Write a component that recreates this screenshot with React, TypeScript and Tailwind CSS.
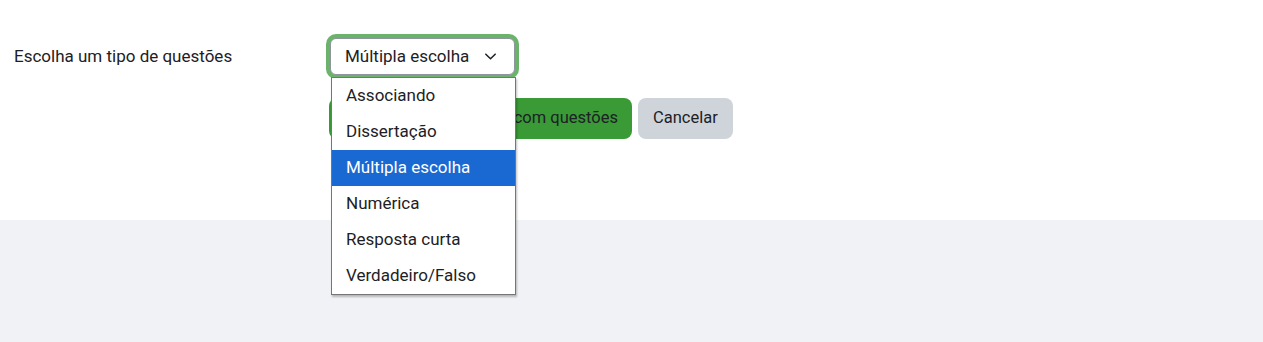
const options = [
  "Associando",
  "Dissertação",
  "Múltipla escolha",
  "Numérica",
  "Resposta curta",
  "Verdadeiro/Falso",
];

const Chevron = () => (
  <svg width="15" height="15" viewBox="0 0 16 16" fill="none">
    <path
      d="M3 5.5l5 5 5-5"
      stroke="#1d2125"
      strokeWidth="1.6"
      strokeLinecap="round"
      strokeLinejoin="round"
    />
  </svg>
);

export default function App() {
  const selected = "Múltipla escolha";
  return (
    <div className="w-[1263px] h-[342px] flex flex-col bg-white font-['Roboto',sans-serif] text-[#1d2125] text-[17px]">
      <div className="h-[220px] pl-[14px] pt-[38px]">
        <div className="flex items-center">
          <label className="w-[316px] leading-[37px]">Escolha um tipo de questões</label>
          <div className="relative">
            <div className="w-[185px] h-[37px] flex items-center justify-between pl-[14px] pr-[16px] bg-white border border-[#8f959e] rounded-[6px] shadow-[0_0_0_4px_#6bb36b]">
              <span>{selected}</span>
              <Chevron />
            </div>
            <ul className="absolute left-[1px] top-[39px] w-[185px] bg-white border border-[#767676] shadow-[1px_2px_2px_rgba(0,0,0,0.25)] z-10">
              {options.map((o) => (
                <li
                  key={o}
                  className={
                    "h-[36px] flex items-center pl-[14px] " +
                    (o === selected ? "bg-[#1a68d2] text-white" : "")
                  }
                >
                  {o}
                </li>
              ))}
            </ul>
          </div>
        </div>
        <div className="flex gap-[6px] ml-[315px] mt-[23px]">
          <button className="w-[303px] h-[41px] flex items-center justify-end pr-[14px] rounded-[8px] bg-[#399a36] text-[#1d2125] text-[16.5px] whitespace-nowrap overflow-hidden">
            Adicionar ao banco com questões
          </button>
          <button className="h-[41px] px-[15px] rounded-[8px] bg-[#ced4da] text-[#1d2125] text-[16.5px]">
            Cancelar
          </button>
        </div>
      </div>
      <div className="flex-1 bg-[#f0f2f5]" />
    </div>
  );
}
